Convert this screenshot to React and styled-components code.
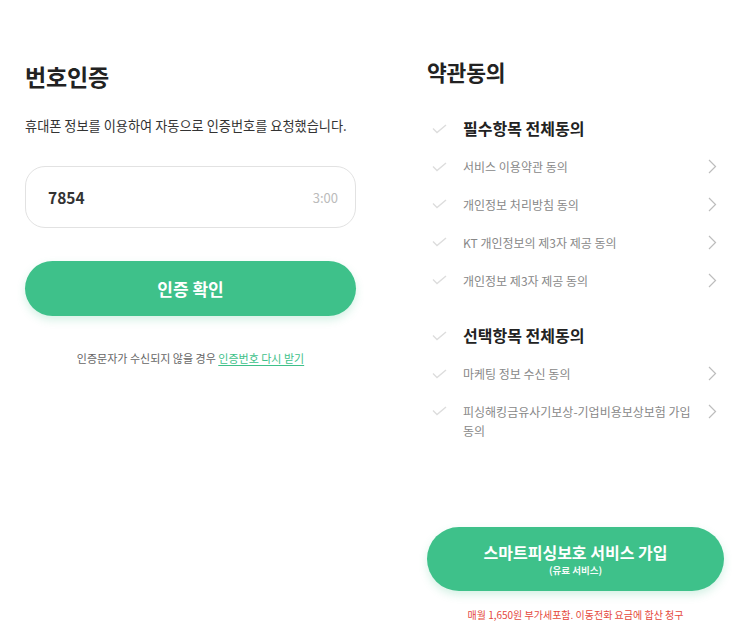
import React from 'react'
import styled, { createGlobalStyle } from 'styled-components'

const GREEN = '#3ec18a'

const Global = createGlobalStyle`
  html, body {
    margin: 0;
    background: #fff;
  }
  body {
    font-family: "Noto Sans CJK KR", "Noto Sans", sans-serif;
    color: #222;
  }
`

const Page = styled.div`
  display: grid;
  grid-template-columns: 331px 297px;
  column-gap: 71px;
  padding: 0 22px 0 25px;
  width: 746px;
  height: 642px;
  box-sizing: border-box;
`

const Column = styled.section`
  display: flex;
  flex-direction: column;
  padding-top: ${({ top }) => top}px;
  padding-bottom: ${({ bottom }) => bottom || 0}px;
`

const Title = styled.h2`
  margin: 0;
  font-size: ${({ size }) => size}px;
  line-height: 30px;
  font-weight: 700;
  color: #222;
  letter-spacing: -0.2px;
`

const Desc = styled.p`
  margin: 25px 0 0;
  font-size: 13.2px;
  line-height: 20px;
  color: #333;
`

const CodeBox = styled.div`
  margin-top: 30px;
  height: 62px;
  box-sizing: border-box;
  border: 1px solid #e2e2e2;
  border-radius: 20px;
  display: flex;
  align-items: center;
  justify-content: space-between;
  padding: 0 17px 0 22px;
`

const Code = styled.span`
  font-size: 15.5px;
  font-weight: 600;
  color: #333;
`

const Timer = styled.span`
  font-size: 13px;
  color: #bbb;
`

const PillButton = styled.button`
  border: 0;
  border-radius: 999px;
  background: ${GREEN};
  color: #fff;
  font-family: inherit;
  width: 100%;
  height: ${({ h }) => h}px;
  margin-top: ${({ mt }) => mt}px;
  box-shadow: 0 4px 8px rgba(62, 193, 138, 0.22);
  display: flex;
  flex-direction: column;
  align-items: center;
  justify-content: center;
  cursor: pointer;
  padding: 0;
`

const ButtonLabel = styled.span`
  font-size: ${({ size }) => size}px;
  font-weight: 700;
  line-height: ${({ lh }) => lh}px;
`

const SubLabel = styled.span`
  font-size: 9.5px;
  font-weight: 600;
  line-height: 12px;
  margin-top: 2px;
  opacity: 0.95;
`

const Helper = styled.p`
  margin: 34px 0 0;
  text-align: center;
  font-size: 11px;
  line-height: 16px;
  color: #666;

  a {
    color: ${GREEN};
    text-decoration: underline;
    text-underline-offset: 2px;
  }
`

const Group = styled.ul`
  list-style: none;
  margin: ${({ mt }) => mt}px 0 0;
  padding: 0;
`

const Row = styled.li`
  display: flex;
  align-items: flex-start;
  padding: 9.4px 7px 9.4px 5px;
`

const CheckWrap = styled.span`
  flex: none;
  width: 15px;
  height: 19px;
  margin-right: 16px;
  display: flex;
  align-items: center;
`

const RowText = styled.span`
  flex: 1;
  font-size: ${({ head }) => (head ? 16 : 12)}px;
  font-weight: ${({ head }) => (head ? 700 : 400)};
  line-height: 19px;
  color: ${({ head }) => (head ? '#222' : '#888')};
  word-break: keep-all;
`

const Chevron = styled.span`
  flex: none;
  width: 9px;
  height: 19px;
  margin-left: 8px;
  display: flex;
  align-items: center;
`

const Spacer = styled.div`
  flex: 1;
`

const Notice = styled.p`
  margin: 17px 0 0;
  text-align: center;
  font-size: 10px;
  line-height: 14px;
  color: #e5483c;
`

const Check = () => (
  <svg width="15" height="10" viewBox="0 0 15 10" fill="none">
    <path d="M1 4.5 L5 8.5 L14 1" stroke="#dddddd" strokeWidth="1.4" />
  </svg>
)

const Arrow = () => (
  <svg width="9" height="15" viewBox="0 0 9 15" fill="none">
    <path d="M1 1 L7.5 7.5 L1 14" stroke="#bdbdbd" strokeWidth="1.2" />
  </svg>
)

const Item = ({ head, children, link }) => (
  <Row>
    <CheckWrap><Check /></CheckWrap>
    <RowText head={head}>{children}</RowText>
    {link && <Chevron><Arrow /></Chevron>}
  </Row>
)

const App = () => {
  return (
    <>
      <Global />
      <Page>
        <Column top={61}>
          <Title size={23}>번호인증</Title>
          <Desc>휴대폰 정보를 이용하여 자동으로 인증번호를 요청했습니다.</Desc>
          <CodeBox>
            <Code>7854</Code>
            <Timer>3:00</Timer>
          </CodeBox>
          <PillButton h={55} mt={33}>
            <ButtonLabel size={17} lh={24}>인증 확인</ButtonLabel>
          </PillButton>
          <Helper>
            인증문자가 수신되지 않을 경우 <a>인증번호 다시 받기</a>
          </Helper>
        </Column>

        <Column top={57} bottom={20}>
          <Title size={21.5}>약관동의</Title>
          <Group mt={23}>
            <Item head>필수항목 전체동의</Item>
            <Item link>서비스 이용약관 동의</Item>
            <Item link>개인정보 처리방침 동의</Item>
            <Item link>KT 개인정보의 제3자 제공 동의</Item>
            <Item link>개인정보 제3자 제공 동의</Item>
          </Group>
          <Group mt={18}>
            <Item head>선택항목 전체동의</Item>
            <Item link>마케팅 정보 수신 동의</Item>
            <Item link>피싱해킹금유사기보상-기업비용보상보험 가입 동의</Item>
          </Group>
          <Spacer />
          <PillButton h={64} mt={0}>
            <ButtonLabel size={16} lh={20}>스마트피싱보호 서비스 가입</ButtonLabel>
            <SubLabel>(유료 서비스)</SubLabel>
          </PillButton>
          <Notice>매월 1,650원 부가세포함. 이동전화 요금에 합산 청구</Notice>
        </Column>
      </Page>
    </>
  )
}

export default App
